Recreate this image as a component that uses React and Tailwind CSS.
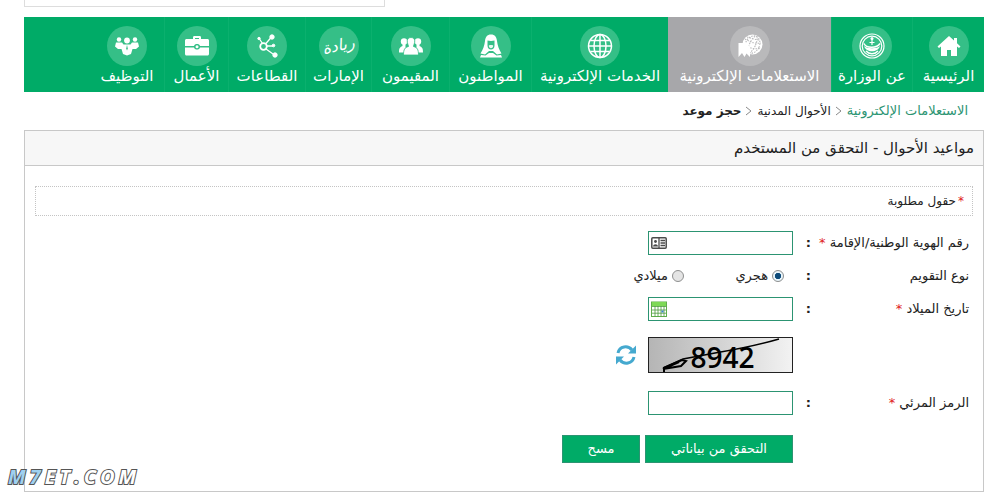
import { useState } from 'react';

const HomeIcon = () => (
  <svg className="w-6 h-6" viewBox="0 0 24 24" fill="currentColor">
    <path d="M12 2 .5 12.500 2 14l2-1.500V22h6v-6h4v6h6v-9.500l2 1.500 1.500-1.500L20 9.200V4h-3v2.500z" />
  </svg>
);

const EmblemIcon = () => (
  <svg className="w-[26px] h-[26px]" viewBox="0 0 26 26" fill="none" stroke="currentColor">
    <circle cx="13" cy="13" r="12" strokeWidth="1.200" />
    <circle cx="13" cy="13" r="9.800" strokeWidth="1.200" />
    <circle cx="13" cy="5.500" r="1.500" fill="currentColor" stroke="none" />
    <path d="M13 5v7M10.500 9.500h5" strokeWidth="1.200" />
    <path d="M5 10.500c2 5 13 5 16 0" strokeWidth="1.500" />
    <path d="M5 13c2 7 14 7 16 0-3 3-13 3-16 0z" fill="currentColor" stroke="none" />
    <path d="M7 18c3 3.500 9 3.500 12 0" strokeWidth="1.500" />
  </svg>
);

const InquiryIcon = () => (
  <svg className="w-[26px] h-[26px]" viewBox="0 0 26 26" fill="none" stroke="currentColor">
    <circle cx="15.500" cy="11.500" r="10" fill="currentColor" stroke="none" />
    <g stroke="#b9b9bb" strokeWidth="1.100" strokeDasharray="1.500 1.200">
      <ellipse cx="15.500" cy="11.500" rx="3" ry="9" transform="rotate(25 15.500 11.500)" />
      <ellipse cx="15.500" cy="11.500" rx="7" ry="9" transform="rotate(25 15.500 11.500)" />
      <path d="M8 6c5 3 10 5 16 4M6 11c6 4 12 6 18 4M10 4c4 1 9 3 13 3" />
    </g>
    <path d="M1.500 10h8l3.500 4v10l-3.500-3.500L7.500 24 5 20l-3.500 4z" fill="currentColor" stroke="none" />
  </svg>
);

const GlobeIcon = () => (
  <svg className="w-[26px] h-[26px]" viewBox="0 0 26 26" fill="none" stroke="currentColor" strokeWidth="1.500">
    <circle cx="13" cy="13" r="11.500" />
    <ellipse cx="13" cy="13" rx="6" ry="11.500" />
    <path d="M13 1.500v23M1.500 13h23M3.500 7.500h19M3.500 18.500h19" />
  </svg>
);

const CitizenIcon = () => (
  <svg className="w-6 h-6" viewBox="0 0 24 24" fill="currentColor">
    <path
      fillRule="evenodd"
      d="M12 .5C8 .5 6.500 3 6 7c-.5 4.500-2 8.500-4.500 12.500L6 20.500l4-3.500h4l4 3.500 4.500-1C20 15.500 18.500 11.500 18 7c-.5-4-2-6.500-6-6.500zM8.500 6.500c2 .6 5 .6 7 0v5c0 2.500-1.500 4-3.500 4s-3.500-1.500-3.500-4z"
    />
    <path d="M9.800 11.500c1.500-.6 3-.6 4.400 0 0 1.800-.8 2.800-2.200 2.800s-2.200-1-2.200-2.800z" fill="#e8f8f0" />
    <path d="M1 23.500 2 21l4.500.5L10 19h4l3.500 2.500L22 21l1 2.500z" />
  </svg>
);

const ResidentsIcon = () => (
  <svg className="w-6 h-6" viewBox="0 0 24 24" fill="currentColor">
    <circle cx="5" cy="7.500" r="3.200" />
    <circle cx="19" cy="7.500" r="3.200" />
    <path d="M0 18.500c0-4 .5-5 3.500-6.500V9h3v4l1 5.500zM24 18.500c0-4-.5-5-3.500-6.500V9h-3v4l-1 5.500z" />
    <path
      d="M12 3.500c3 0 4.200 2 3.700 5-.3 1.700-1.200 2.500-1.200 4 3.500 1 5 2.500 5 8.500h-15c0-6 1.500-7.500 5-8.500 0-1.500-.9-2.300-1.200-4-.5-3 .7-5 3.700-5z"
      stroke="#35bf87"
      strokeWidth=".800"
    />
  </svg>
);

const EmiratesIcon = () => <span className="-rotate-12 text-base leading-5 italic">ريادة</span>;

const SectorsIcon = () => (
  <svg className="w-6 h-6" viewBox="0 0 24 24" fill="currentColor" stroke="currentColor">
    <circle cx="8.500" cy="12.500" r="3.300" fill="none" strokeWidth="1.800" />
    <path d="m10.500 10 6-7M7.500 9.500 4.500 5M12 12h6M11 15l7 5" strokeWidth="1.300" />
    <circle cx="17" cy="3" r="2.200" />
    <circle cx="4" cy="4.500" r="1.200" />
    <circle cx="18.500" cy="11.500" r="1.300" />
    <circle cx="20" cy="21" r="2.200" />
  </svg>
);

const BusinessIcon = () => (
  <svg className="w-6 h-6" viewBox="0 0 24 24" fill="currentColor">
    <path fillRule="evenodd" d="M8 5V3.500C8 2.500 8.500 2 9.500 2h5c1 0 1.500.5 1.500 1.500V5h6.500c.8 0 1.500.7 1.500 1.500V12h-9c-.5-1.500-1.500-2-3-2s-2.500.5-3 2H0V6.500C0 5.700.7 5 1.500 5zm2 0h4V4h-4z" />
    <path d="M0 13.500h9c.5 1.500 1.500 2 3 2s2.500-.5 3-2h9V20c0 .8-.7 1.500-1.500 1.500h-21C.7 21.500 0 20.800 0 20z" />
    <circle cx="12" cy="12.800" r="1.500" />
  </svg>
);

const HiringIcon = () => (
  <svg className="w-6 h-6" viewBox="0 0 24 24" fill="currentColor">
    <circle cx="12" cy="6.500" r="2.900" />
    <circle cx="4" cy="5.500" r="2.200" />
    <circle cx="20" cy="5.500" r="2.200" />
    <path d="M1 8.500h6l1.500 2h7l1.500-2h6l1 4-3 2.500h-3.500L16 20l-4 1.500L8 20l-1.500-5H3L0 12.500z" />
    <path d="m12 11-.8 3.500.8 2 .8-2z" fill="#35bf87" />
  </svg>
);

const IdCardIcon = () => (
  <svg className="w-4 h-3" viewBox="0 0 16 12" fill="none" stroke="#4b4b4b">
    <rect x=".8" y=".8" width="14.400" height="10.400" rx="1" strokeWidth="1.500" />
    <path d="M8 1v10M9.500 3.500H14M9.500 6H14M9.500 8.500H14" strokeWidth="1.300" />
    <circle cx="4.500" cy="4.500" r="1.400" fill="#4b4b4b" stroke="none" />
    <path d="M2 9.500c.3-3 4.700-3 5 0z" fill="#4b4b4b" stroke="none" />
  </svg>
);

const CalendarIcon = () => (
  <svg className="w-4 h-4" viewBox="0 0 16 16">
    <rect x=".5" y="1" width="15" height="14.500" fill="#fff" stroke="#5fae4b" />
    <rect x="1" y="1" width="14" height="4" fill="#7ed957" />
    <path d="M1 5.500h14M1 9h14M1 12.200h14M4 5v10.500M7 5v10.500M10 5v10.500M13 5v10.500" stroke="#4c9a3c" strokeWidth=".800" />
    <rect x="10.500" y="9.500" width="2" height="2" fill="#3b82d0" />
  </svg>
);

const RefreshIcon = () => (
  <svg className="w-5 h-5" viewBox="0 0 20 20" fill="none" stroke="#45a9cf" strokeWidth="3">
    <path d="M2 8C3.500 1 12 0 16 5M18 12c-1.500 7-10 8-14 3" />
    <path d="M20 .5V8.500h-8zM0 19.500v-8h8z" fill="#45a9cf" stroke="none" />
  </svg>
);

const Chevron = () => (
  <svg className="w-2 h-3" viewBox="0 0 8 12" fill="none" stroke="#888">
    <path d="m1 2 5 4-5 4" />
  </svg>
);

const navItems = [
  { label: 'الرئيسية', icon: HomeIcon, width: 'w-[72px]' },
  { label: 'عن الوزارة', icon: EmblemIcon, width: 'w-[81px]' },
  { label: 'الاستعلامات الإلكترونية', icon: InquiryIcon, width: 'w-[163px]', active: true },
  { label: 'الخدمات الإلكترونية', icon: GlobeIcon, width: 'w-[137px]' },
  { label: 'المواطنون', icon: CitizenIcon, width: 'w-[82px]' },
  { label: 'المقيمون', icon: ResidentsIcon, width: 'w-[78px]' },
  { label: 'الإمارات', icon: EmiratesIcon, width: 'w-[66px]' },
  { label: 'القطاعات', icon: SectorsIcon, width: 'w-[77px]' },
  { label: 'الأعمال', icon: BusinessIcon, width: 'w-[64px]' },
  { label: 'التوظيف', icon: HiringIcon, width: 'w-[74px]' },
];

function NavBar() {
  return (
    <nav className="flex h-[75px] bg-[#00ab67]">
      {navItems.map(({ label, icon: Icon, width, active }) => (
        <a
          key={label}
          href="#"
          className={`${width} shrink-0 flex flex-col items-center pt-[9px] text-white text-[15px] leading-5 whitespace-nowrap ${
            active ? 'bg-[#a7a7aa]' : 'border-l border-[#0bb06e] last:border-l-0'
          }`}
        >
          <span className={`w-10 h-10 shrink-0 rounded-full flex items-center justify-center ${active ? 'bg-[#b9b9bb]' : 'bg-[#35bf87]'}`}>
            <Icon />
          </span>
          {label}
        </a>
      ))}
    </nav>
  );
}

function Row({ label, htmlFor, required, children }) {
  const Label = htmlFor ? 'label' : 'span';
  return (
    <div className="flex items-center min-h-6">
      <div className="w-[158px] shrink-0 whitespace-nowrap">
        {label && (
          <Label htmlFor={htmlFor}>
            {label} {required && <span className="text-[#e02020]">*</span>}
          </Label>
        )}
      </div>
      <span className="w-[18px] shrink-0 font-bold">{label && ':'}</span>
      {children}
    </div>
  );
}

function TextField({ id, value, onChange, icon }) {
  return (
    <div className="w-[145px] h-6 flex items-center border border-[#2c9472] bg-white pl-[2px]">
      <input id={id} value={value} onChange={onChange} className="flex-1 min-w-0 h-full px-1 outline-none" />
      {icon}
    </div>
  );
}

const radioClass =
  'appearance-none w-3 h-3 rounded-full border border-[#8e8f8f] bg-[#e4e4e4] checked:bg-[radial-gradient(circle,#0c4a7a_40%,#e8f4fa_50%)]';

export default function App() {
  const [form, setForm] = useState({ id: '', birth: '', code: '' });
  const [calendar, setCalendar] = useState('hijri');

  const update = (key) => (e) => setForm({ ...form, [key]: e.target.value });
  const clear = () => setForm({ id: '', birth: '', code: '' });

  return (
    <div dir="rtl" className="relative pl-6 pr-[18px] bg-white text-[#222] text-[13px] leading-5 font-['DejaVu_Sans',sans-serif]">
      <div className="flex justify-end">
        <div className="w-[361px] h-[7px] border border-t-0 border-[#ddd]" />
      </div>

      <div className="pt-[10px]">
        <NavBar />
      </div>

      <div className="flex items-center gap-1 h-[38px] pr-4 text-xs">
        <a href="#" className="text-[13px] text-[#2c9472]">الاستعلامات الإلكترونية</a>
        <Chevron />
        <a href="#">الأحوال المدنية</a>
        <Chevron />
        <strong>حجز موعد</strong>
      </div>

      <main className="border border-[#c8c8c8] pb-7">
        <h1 className="h-[35px] px-[9px] flex items-center bg-[#f7f7f7] border-b border-[#c8c8c8] text-[15px]">
          مواعيد الأحوال - التحقق من المستخدم
        </h1>

        <div className="pt-5 px-[10px]">
          <p className="h-[30px] px-2 flex items-center gap-0.5 border border-dotted border-[#c4c4c4] text-xs">
            <span className="text-[#e02020]">*</span> حقول مطلوبة
          </p>

          <form className="pt-[15px] pr-1" onSubmit={(e) => e.preventDefault()}>
            <Row label="رقم الهوية الوطنية/الإقامة" htmlFor="national-id" required>
              <TextField id="national-id" value={form.id} onChange={update('id')} icon={<IdCardIcon />} />
            </Row>
            <div className="py-[9px]">
              <Row label="نوع التقويم">
                <div className="flex pr-[9px]" role="radiogroup" aria-label="نوع التقويم">
                  <label className="w-[100px] flex items-center gap-1">
                    <input
                      type="radio"
                      name="calendar"
                      checked={calendar === 'hijri'}
                      onChange={() => setCalendar('hijri')}
                      className={radioClass}
                    />
                    هجري
                  </label>
                  <label className="flex items-center gap-1">
                    <input
                      type="radio"
                      name="calendar"
                      checked={calendar === 'gregorian'}
                      onChange={() => setCalendar('gregorian')}
                      className={radioClass}
                    />
                    ميلادي
                  </label>
                </div>
              </Row>
            </div>
            <Row label="تاريخ الميلاد" htmlFor="birth" required>
              <TextField id="birth" value={form.birth} onChange={update('birth')} icon={<CalendarIcon />} />
            </Row>
            <div className="pt-4 pb-[18px]">
              <Row>
                <div className="relative w-[145px] h-9 border border-[#222] bg-linear-to-r from-[#b5b5b5] to-[#f2f2f2] flex items-center justify-center text-[28px] leading-9 font-semibold text-black font-['Open_Sans',sans-serif]">
                  <span className="pt-1 pl-1">8942</span>
                  <svg className="absolute inset-0 w-full h-full" viewBox="0 0 143 34" fill="none" stroke="#000">
                    <path d="M130 1C106 8 84 12 66 15L34 21 14 30" strokeWidth="1.500" />
                    <path d="M15 34v-4l18-8 4 1-5 5-18 3 16-7" strokeWidth="2" />
                  </svg>
                </div>
                <button type="button" aria-label="تحديث" className="mr-3">
                  <RefreshIcon />
                </button>
              </Row>
            </div>
            <Row label="الرمز المرئي" htmlFor="code" required>
              <TextField id="code" value={form.code} onChange={update('code')} />
            </Row>
            <div className="flex gap-[5px] pt-5 pr-44 text-white">
              <button type="submit" className="w-[148px] h-7 bg-[#00ab67] border border-[#2c9472]">
                التحقق من بياناتي
              </button>
              <button type="button" onClick={clear} className="w-[78px] h-7 bg-[#00ab67] border border-[#2c9472]">
                مسح
              </button>
            </div>
          </form>
        </div>
      </main>

      {/* Watermark */}
      <div
        dir="ltr"
        className="absolute left-2 bottom-[3px] text-[20px] leading-6 font-bold italic tracking-[4px] text-white [-webkit-text-stroke:2px_#555] [paint-order:stroke_fill] font-['Open_Sans',sans-serif]"
      >
        <span className="text-[#9fd0f0]">M7</span>ET.COM
      </div>
    </div>
  );
}
